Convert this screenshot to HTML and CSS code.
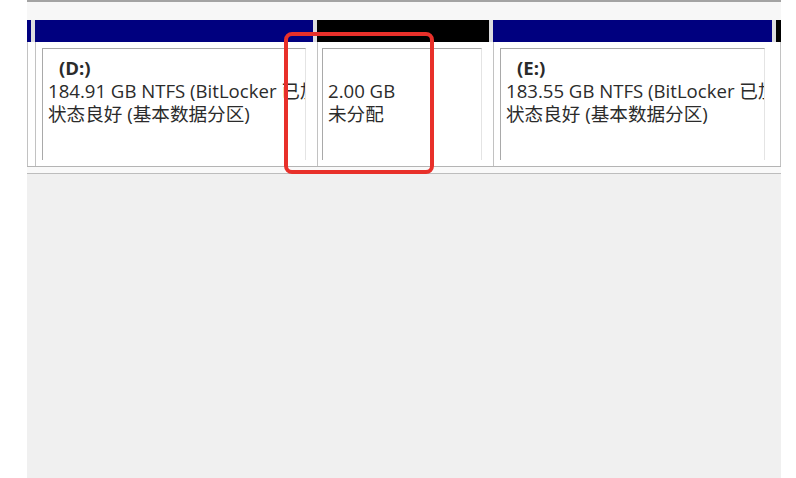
FILE: index.html
```html
<!DOCTYPE html>
<html lang="zh-CN">
<head>
	<meta charset="UTF-8">
	<meta name="viewport" content="width=device-width, initial-scale=1.0">
	<title>磁盘管理</title>
	<link rel="stylesheet" href="styles.css">
</head>
<body>
	<div class="panel">
		<div class="top-gap"></div>

		<div class="strip"> <!-- 分区条 -->
			<div class="part edge-left">
				<div class="bar navy"></div>
				<div class="part-body"></div>
			</div>

			<div class="part part-d">
				<div class="bar navy"></div>
				<div class="part-body">
					<div class="cell">
						<div class="line label">(D:)</div>
						<div class="line">184.91 GB NTFS (BitLocker 已加密)</div>
						<div class="line">状态良好 (基本数据分区)</div>
					</div>
				</div>
			</div>

			<div class="part part-free">
				<div class="bar black"></div>
				<div class="part-body">
					<div class="cell">
						<div class="line"></div>
						<div class="line">2.00 GB</div>
						<div class="line">未分配</div>
					</div>
				</div>
			</div>

			<div class="part part-e">
				<div class="bar navy"></div>
				<div class="part-body">
					<div class="cell">
						<div class="line label">(E:)</div>
						<div class="line">183.55 GB NTFS (BitLocker 已加密)</div>
						<div class="line">状态良好 (基本数据分区)</div>
					</div>
				</div>
			</div>

			<div class="part edge-right">
				<div class="bar black"></div>
				<div class="part-body"></div>
			</div>
		</div>

		<div class="strip-foot"></div>
	</div>

	<div class="mark"></div> <!-- 红色标注框 -->
</body>
</html>
```

FILE: styles.css
```css
body {
    margin: 0;
    background-color: #ffffff;
    font-family: "Open Sans", "Noto Sans CJK SC", sans-serif;
    color: #2b2b2b;
}
.panel {
    margin-left: 27px;
    width: 754px;
    height: 476px;
    background-color: #f0f0f0;
    border-top: 2px solid #a3a3a3;
}
.top-gap {
    height: 18px;
    background-color: #f7f7f7;
}
.strip {
    display: flex;
    gap: 4px;
    height: 146px;
    background: linear-gradient(#dcdcdf 22px, #ffffff 22px);
    border-bottom: 1px solid #b4b4b4;
}
.part {
    flex: none;
    display: flex;
    flex-direction: column;
}
.edge-left { width: 4px; }
.part-d { width: 278px; }
.part-free { width: 172px; }
.part-e { width: 279px; }
.edge-right { width: 5px; }

.bar {
    height: 22px;
}
.navy { background-color: #00007f; }
.black { background-color: #000000; }

.part-body {
    flex: 1;
    background-color: #ffffff;
    border-left: 1px solid #c2c2c2;
    padding: 6px 7px 6px 6px;
}
.edge-right .part-body {
    border-left: none;
    border-right: 1px solid #c2c2c2;
    padding: 0;
}
.edge-left .part-body {
    padding: 0;
}
.part-free .part-body {
    padding-left: 4px;
}
.cell {
    box-sizing: border-box;
    height: 112px;
    border-top: 1px solid #a9a9a9;
    border-left: 1px solid #a9a9a9;
    border-right: 1px solid #e4e4e4;
    padding: 7px 0 0 5px;
    overflow: hidden;
}
.line {
    font-size: 18.6px;
    line-height: 23px;
    height: 23px;
    white-space: nowrap;
}
.label {
    font-weight: bold;
    padding-left: 11px;
}
.strip-foot {
    height: 6px;
    background-color: #f9f9f9;
    border-bottom: 1px solid #bdbdbd;
}
.mark {
    position: absolute; /* 叠加在分区条上方的标注 */
    left: 284px;
    top: 32px;
    width: 150px;
    height: 142px;
    box-sizing: border-box;
    border: 4px solid #e8302a;
    border-radius: 8px;
}
```
